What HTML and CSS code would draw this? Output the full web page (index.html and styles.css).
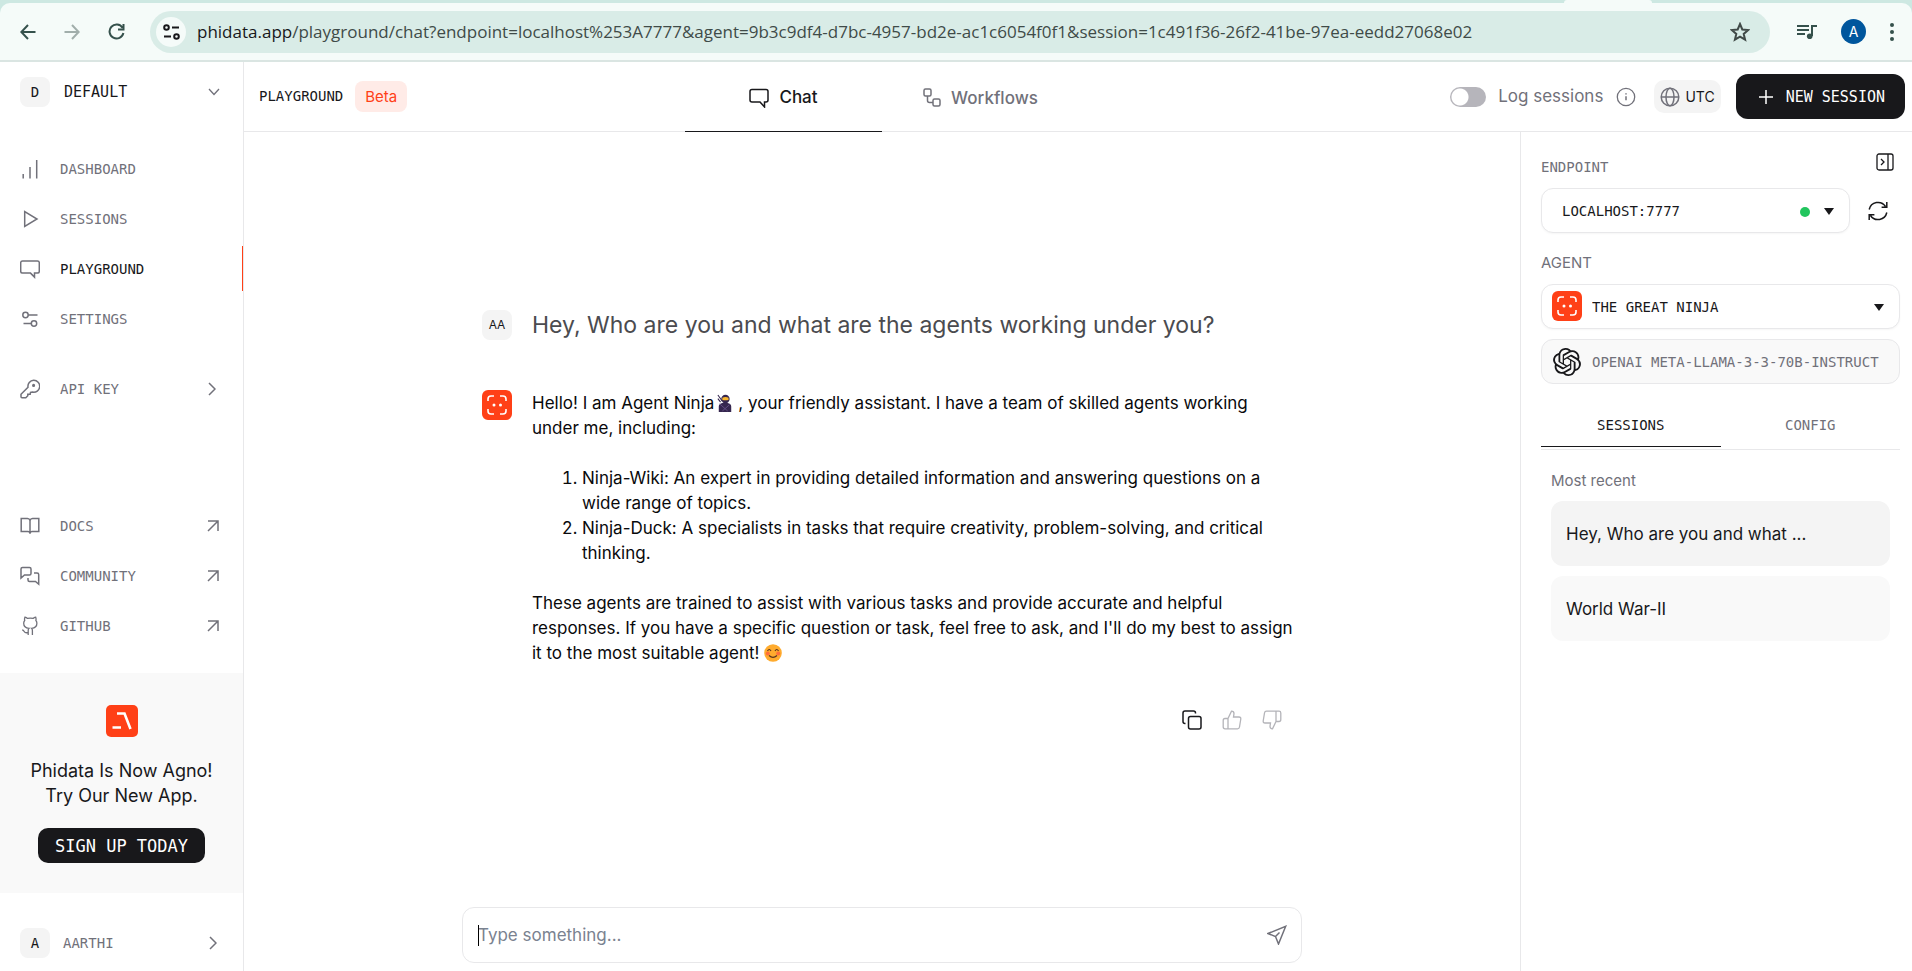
FILE: index.html
```html
<!DOCTYPE html>
<html lang="en">
<head>
<meta charset="utf-8">
<title>Playground</title>
<link rel="stylesheet" href="styles.css">
</head>
<body>
<svg class="sprite" aria-hidden="true">
  <symbol id="arrow-out" viewBox="0 0 12 12"><path d="M1 1h10v10M11 1 1 11"/></symbol>
  <symbol id="chevron" viewBox="0 0 8 14"><path d="m1 1 6 6-6 6"/></symbol>
  <symbol id="bot" viewBox="0 0 30 30"><rect width="30" height="30" rx="6" fill="#ff4017"/><g fill="none" stroke="#fff" stroke-width="1.6"><path d="M6 11V9q0-3 3-3h3M18 6h3q3 0 3 3v2M24 19v2q0 3-3 3h-3M12 24H9q-3 0-3-3v-2"/></g><circle cx="12" cy="15" r="1.5" fill="#fff"/><circle cx="18.500" cy="15" r="1.500" fill="#fff"/></symbol>
</svg>

<header class="browser">
  <div class="tabstrip"><span class="active-tab"></span></div>
  <div class="toolbar">
    <button class="plain nav-btn" aria-label="Back"><svg width="16" height="16" viewBox="0 0 16 16" class="ico dark w2"><path d="M15.500 8H1.500M8 1 1.300 8 8 15"/></svg></button>
    <button class="plain nav-btn" aria-label="Forward"><svg width="16" height="16" viewBox="0 0 16 16" class="ico faded w2"><path d="M.5 8h14M8 1l6.700 7L8 15"/></svg></button>
    <button class="plain nav-btn" aria-label="Reload"><svg width="17" height="17" viewBox="0 0 17 17" class="ico dark w2"><path d="M14.500 4.800A7 7 0 1 0 15.400 10M15.500 1v5.500H10"/></svg></button>
    <div class="omnibox">
      <button class="plain site-info" aria-label="Site information"><svg width="17" height="16" viewBox="0 0 17 16" class="ico ink w2"><circle cx="3.500" cy="3.500" r="2.300"/><path d="M9 3.500h7M1 12.500h7"/><circle cx="13.500" cy="12.500" r="2.300"/></svg></button>
      <div class="url"><span>phidata.app</span>/playground/chat?endpoint=localhost%253A7777&amp;agent=9b3c9df4-d7bc-4957-bd2e-ac1c6054f0f1&amp;session=1c491f36-26f2-41be-97ea-eedd27068e02</div>
      <button class="plain" aria-label="Bookmark"><svg width="20" height="20" viewBox="0 0 20 20" class="ico slate w2"><path d="m10 2 2.300 5.500 5.900.5-4.500 3.900 1.400 5.800L10 14.600l-5.100 3.100 1.400-5.800L1.800 8l5.900-.5z"/></svg></button>
    </div>
    <button class="plain" aria-label="Media"><svg width="20" height="16" viewBox="0 0 20 16" class="ico dark w2"><path d="M0 2h12M0 6h12M0 10h8M15 12V2h5"/><circle cx="12.700" cy="12.300" r="2.800" fill="#35514c" stroke="none"/></svg></button>
    <button class="plain profile" aria-label="Profile">A</button>
    <button class="plain" aria-label="Menu"><svg width="4" height="18" viewBox="0 0 4 18" fill="#35514c"><circle cx="2" cy="2" r="2"/><circle cx="2" cy="9" r="2"/><circle cx="2" cy="16" r="2"/></svg></button>
  </div>
</header>

<div class="app">
  <aside class="sidebar">
    <button class="plain workspace"><span class="badge">D</span><span class="grow">DEFAULT</span><svg width="12" height="8" viewBox="0 0 12 8" class="ico"><path d="m1 1 5 5.500L11 1"/></svg></button>
    <nav class="menu">
      <a href="#"><svg width="20" height="20" viewBox="0 0 20 20" class="ico w15"><path d="M3.200 15v4.500M10 8v11.500M16.700 1v18.500"/></svg>DASHBOARD</a>
      <a href="#"><svg width="20" height="20" viewBox="0 0 20 20" class="ico w15"><path d="M4.700 2.500v15L17 10z"/></svg>SESSIONS</a>
      <a href="#" class="current"><svg width="20" height="20" viewBox="0 0 20 20" class="ico w15"><path d="M2.500 2h15q1.800 0 1.800 1.800v8.500q0 1.800-1.800 1.800h-3v4l-4-4h-8Q.7 14.100.7 12.300V3.800Q.7 2 2.500 2z"/></svg>PLAYGROUND</a>
      <a href="#"><svg width="20" height="20" viewBox="0 0 20 20" class="ico w15"><circle cx="5.500" cy="6" r="2.700"/><path d="M8.200 6h9.300M3.500 14.500h8"/><circle cx="14" cy="14.500" r="2.700"/></svg>SETTINGS</a>
      <a href="#" class="spaced"><svg width="20" height="20" viewBox="0 0 20 20" class="ico w15"><path d="M8 8.200A5.900 5.900 0 1 1 12.500 13l-2 .3-.3 2H7.800v1.500l-2 2H2q-1 0-1-1v-2.600z"/><circle cx="13.600" cy="6.400" r=".8" fill="#71717a"/></svg><span class="grow">API KEY</span><svg width="8" height="14" class="ico w15 end"><use href="#chevron"/></svg></a>
    </nav>
    <nav class="menu links">
      <a href="#"><svg width="20" height="20" viewBox="0 0 20 20" class="ico w15"><path d="M10 4.500Q9.500 2.500 7.500 2.500H1.200v13h6.600q2.200 0 2.200 2.200V4.500q.5-2 2.500-2h6.300v13h-6.600q-2.200 0-2.200 2.200"/></svg><span class="grow">DOCS</span><svg width="12" height="12" class="ico w15"><use href="#arrow-out"/></svg></a>
      <a href="#"><svg width="20" height="20" viewBox="0 0 20 20" class="ico w15"><path d="M2.500 1.500h7q1.500 0 1.500 1.500v4.500Q11 9 9.500 9h-5L1 12V3q0-1.500 1.500-1.500zM14 7h3q1.700 0 1.700 1.500v9.700L15.500 15.500h-6Q8 15.500 8 14v-2"/></svg><span class="grow">COMMUNITY</span><svg width="12" height="12" class="ico w15"><use href="#arrow-out"/></svg></a>
      <a href="#"><svg width="20" height="20" viewBox="0 0 20 20" class="ico"><path d="M8.200 19v-4.500q0-1.500.8-2.200-5.300-.5-5.300-5.100 0-1.600 1-2.700Q4.200 3 4.900 1.200q1.600.3 2.600 1.200 2.700-.7 5.600 0 1-.9 2.600-1.200.7 1.800.2 3.300 1 1.100 1 2.700 0 4.600-5.300 5.100.8.700.8 2.200V19M8.200 16.500q-3 .8-4-1-.8-1.500-2-1.500"/></svg><span class="grow">GITHUB</span><svg width="12" height="12" class="ico w15"><use href="#arrow-out"/></svg></a>
    </nav>
    <section class="promo">
      <svg width="32" height="32" viewBox="0 0 32 32"><rect width="32" height="32" rx="5" fill="#ff4017"/><path d="M11 8.500h7.500L24.500 24M6.500 22.500H15" fill="none" stroke="#fff" stroke-width="2.600"/></svg>
      <p>Phidata Is Now Agno!<br>Try Our New App.</p>
      <button class="signup">SIGN UP TODAY</button>
    </section>
    <button class="plain user"><span class="badge">A</span><span class="grow">AARTHI</span><svg width="8" height="14" class="ico w15 end"><use href="#chevron"/></svg></button>
  </aside>

  <div class="content">
    <header class="topbar">
      <div class="title"><h1>PLAYGROUND</h1><span class="beta">Beta</span></div>
      <nav class="tabs">
        <a href="#" class="on"><svg width="20" height="20" viewBox="0 0 20 20" class="ico ink w15"><path d="M3 1.500h14q2 0 2 2V12q0 2-2 2h-1.500v5L11 14H3q-2 0-2-2V3.500q0-2 2-2z"/></svg>Chat</a>
        <a href="#"><svg width="18" height="20" viewBox="0 0 18 20" class="ico w15"><rect x="1" y="1" width="7" height="7" rx="1.500"/><rect x="10" y="11" width="7" height="7" rx="1.500"/><path d="M4.500 8v4.500q0 2 2 2H10"/></svg>Workflows</a>
      </nav>
      <div class="actions">
        <label class="log"><input type="checkbox" class="switch">Log sessions</label>
        <svg width="20" height="20" viewBox="0 0 20 20" class="ico info" role="img" aria-label="Info"><circle cx="10" cy="10" r="8.700"/><path d="M10 9.300v4M10 6.200v1.200" stroke-width="1.500"/></svg>
        <button class="utc"><svg width="20" height="20" viewBox="0 0 20 20" class="ico w15"><circle cx="10" cy="10" r="8.800"/><ellipse cx="10" cy="10" rx="4" ry="8.800"/><path d="M1.200 10h17.600"/></svg>UTC</button>
        <button class="new"><svg width="14" height="14" viewBox="0 0 14 14" class="ico white w15"><path d="M7 0v14M0 7h14"/></svg>NEW SESSION</button>
      </div>
    </header>

    <div class="body">
      <main class="chat">
        <div class="thread">
          <article class="row">
            <span class="badge small">AA</span>
            <p class="question">Hey, Who are you and what are the agents working under you?</p>
          </article>
          <article class="row answer">
            <svg width="30" height="30" role="img" aria-label="Agent"><use href="#bot"/></svg>
            <div class="text">
              <p>Hello! I am Agent Ninja<svg class="emoji ninja" width="16" height="18" viewBox="0 0 18 20" role="img" aria-label="ninja"><path d="M1 1l5 7M1 5l3 4" stroke="#35264f" stroke-width="1.200"/><path d="M2 20v-6q0-3 4-4l3-1 3 1q4 1 4 4v6z" fill="#35264f"/><circle cx="9.500" cy="5.500" r="4.700" fill="#35264f"/><path d="M6 4q3.500-1.500 7 0v2.500q-3.500 1-7 0z" fill="#f8b62d"/><path d="m3 11 9 8M14 12l-8 7" stroke="#665087" stroke-width="1"/></svg>, your friendly assistant. I have a team of skilled agents working under me, including:</p>
              <ol>
                <li>Ninja-Wiki: An expert in providing detailed information and answering questions on a wide range of topics.</li>
                <li>Ninja-Duck: A specialists in tasks that require creativity, problem-solving, and critical thinking.</li>
              </ol>
              <p>These agents are trained to assist with various tasks and provide accurate and helpful responses. If you have a specific question or task, feel free to ask, and I'll do my best to assign it to the most suitable agent! <svg class="emoji" width="18" height="18" viewBox="0 0 18 18" role="img" aria-label="smile"><circle cx="9" cy="9" r="8.800" fill="#ffab2e"/><circle cx="3.800" cy="9.500" r="2" fill="#ff6d3a"/><circle cx="14.200" cy="9.500" r="2" fill="#ff6d3a"/><path d="M3.500 7Q5.200 4 7 7M11 7q1.800-3 3.500 0M5 11.500q4 3.600 8 0" fill="none" stroke="#5a3520" stroke-width="1.200"/></svg></p>
            </div>
          </article>
          <div class="feedback">
            <button class="plain" aria-label="Copy"><svg width="20" height="20" viewBox="0 0 20 20" class="ico ink w15"><rect x="6.500" y="6.500" width="12.500" height="12.500" rx="2"/><path d="M3.500 13.500H3q-2 0-2-2V3q0-2 2-2h8.500q2 0 2 2v.5"/></svg></button>
            <button class="plain" aria-label="Good"><svg width="20" height="20" viewBox="0 0 20 20" class="ico pale"><path d="M6 8.500 9.500 1.200q2.500 0 2.500 2.500L11.500 7H17q2 0 1.800 2l-1.300 8q-.3 1.800-2 1.800H3q-1.800 0-1.800-1.800v-6.500q0-2 1.800-2h3zv10.300"/></svg></button>
            <button class="plain" aria-label="Bad"><svg width="20" height="20" viewBox="0 0 20 20" class="ico pale"><path d="M14 11.500l-3.500 7.300Q8 18.800 8 16.300L8.500 13H3q-2 0-1.800-2l1.300-8q.3-1.800 2-1.800H17q1.800 0 1.800 1.800v6.500q0 2-1.800 2h-3zV1.200"/></svg></button>
          </div>
        </div>
        <form class="composer">
          <input type="text" placeholder="Type something..." aria-label="Message"><span class="caret"></span>
          <button class="plain" type="button" aria-label="Send"><svg width="20" height="20" viewBox="0 0 20 20" class="ico w15"><path d="M1 8.500 18.700 1.300 11.500 19l-3-7.500zM8.500 11.500l4-4"/></svg></button>
        </form>
      </main>

      <aside class="panel">
        <div class="panel-head"><label for="endpoint">ENDPOINT</label><button class="plain" aria-label="Collapse"><svg width="18" height="18" viewBox="0 0 18 18" class="ico ink"><rect x="1" y="1" width="16" height="16" rx="2"/><path d="M12 1v16M5 6l3 3-3 3"/></svg></button></div>
        <div class="endpoint">
          <div class="field"><select id="endpoint"><option>LOCALHOST:7777</option></select><i class="dot"></i><i class="tri"></i></div>
          <button class="plain" aria-label="Refresh"><svg width="20" height="20" viewBox="0 0 20 20" class="ico ink w15"><path d="M1.200 8.500A9 9 0 0 1 17.500 5.500M18.800 1v5.200h-5.200M18.800 11.500A9 9 0 0 1 2.500 14.500M1.200 19v-5.200h5.200"/></svg></button>
        </div>
        <label for="agent" class="agent-label">AGENT</label>
        <div class="field agent"><select id="agent"><option>THE GREAT NINJA</option></select><svg class="lead" width="30" height="30"><use href="#bot"/></svg><i class="tri"></i></div>
        <div class="model"><svg width="28" height="28" viewBox="0 0 24 24" fill="#18181b"><path d="M22.2819 9.8211a5.9847 5.9847 0 0 0-.5157-4.9108 6.0462 6.0462 0 0 0-6.5098-2.9A6.0651 6.0651 0 0 0 4.9807 4.1818a5.9847 5.9847 0 0 0-3.9977 2.9 6.0462 6.0462 0 0 0 .7427 7.0966 5.98 5.98 0 0 0 .511 4.9107 6.051 6.051 0 0 0 6.5146 2.9001A5.9847 5.9847 0 0 0 13.2599 24a6.0557 6.0557 0 0 0 5.7718-4.2058 5.9894 5.9894 0 0 0 3.9977-2.9001 6.0557 6.0557 0 0 0-.7475-7.0729zm-9.022 12.6081a4.4755 4.4755 0 0 1-2.8764-1.0408l.1419-.0804 4.7783-2.7582a.7948.7948 0 0 0 .3927-.6813v-6.7369l2.02 1.1686a.071.071 0 0 1 .038.052v5.5826a4.504 4.504 0 0 1-4.4945 4.4944zm-9.6607-4.1254a4.4708 4.4708 0 0 1-.5346-3.0137l.142.0852 4.783 2.7582a.7712.7712 0 0 0 .7806 0l5.8428-3.3685v2.3324a.0804.0804 0 0 1-.0332.0615L9.74 19.9502a4.4992 4.4992 0 0 1-6.1408-1.6464zM2.3408 7.8956a4.485 4.485 0 0 1 2.3655-1.9728V11.6a.7664.7664 0 0 0 .3879.6765l5.8144 3.3543-2.0201 1.1685a.0757.0757 0 0 1-.071 0l-4.8303-2.7865A4.504 4.504 0 0 1 2.3408 7.872zm16.5963 3.8558L13.1038 8.364 15.1192 7.2a.0757.0757 0 0 1 .071 0l4.8303 2.7913a4.4944 4.4944 0 0 1-.6765 8.1042v-5.6772a.79.79 0 0 0-.407-.667zm2.0107-3.0231l-.142-.0852-4.7735-2.7818a.7759.7759 0 0 0-.7854 0L9.409 9.2297V6.8974a.0662.0662 0 0 1 .0284-.0615l4.8303-2.7866a4.4992 4.4992 0 0 1 6.6802 4.66zM8.3065 12.863l-2.02-1.1638a.0804.0804 0 0 1-.038-.0567V6.0742a4.4992 4.4992 0 0 1 7.3757-3.4537l-.142.0805L8.704 5.459a.7948.7948 0 0 0-.3927.6813zm1.0976-2.3654l2.602-1.4998 2.6069 1.4998v2.9994l-2.5974 1.4997-2.6067-1.4997Z"/></svg>OPENAI META-LLAMA-3-3-70B-INSTRUCT</div>
        <nav class="panel-tabs"><a href="#" class="on">SESSIONS</a><a href="#">CONFIG</a></nav>
        <section class="recent">
          <h2>Most recent</h2>
          <button class="session selected">Hey, Who are you and what ...</button>
          <button class="session">World War-II</button>
        </section>
      </aside>
    </div>
  </div>
</div>
</body>
</html>
```

FILE: styles.css
```css
:root {
  --ink: #18181b;
  --muted: #71717a;
  --line: #e8e8ea;
  --brand: #ff4017;
  --mono: "DejaVu Sans Mono", "Liberation Mono", monospace;
}

* { box-sizing: border-box; }

body {
  margin: 0;
  height: 100vh;
  display: flex;
  flex-direction: column;
  font: 17px/25px Inter, "Liberation Sans", sans-serif;
  color: var(--ink);
  background: #fff;
}

p, h1, h2 { margin: 0; font-weight: 400; }
a { color: inherit; text-decoration: none; }
button, input, select { font: inherit; color: inherit; }
svg { flex: none; display: block; }

.sprite { position: absolute; width: 0; height: 0; }
.plain { padding: 0; border: 0; background: none; }
.grow { flex: 1; text-align: left; }

.ico { fill: none; stroke: var(--muted); stroke-width: 1.3; }
.w15 { stroke-width: 1.5; }
.w2 { stroke-width: 2; }
.ink { stroke: var(--ink); }
.white { stroke: #fff; }
.dark { stroke: #35514c; }
.slate { stroke: #414a48; }
.faded { stroke: #a1aeab; }
.pale { stroke: #b4b4b9; }

.badge {
  width: 30px;
  height: 30px;
  flex: none;
  display: grid;
  place-items: center;
  border-radius: 8px;
  background: #f4f4f4;
  color: var(--ink);
  font-size: 14px;
}
.badge.small { font-size: 12px; }

/* Browser chrome */
.browser { background: #cde8e2; }
.tabstrip { height: 3px; display: flex; justify-content: flex-end; }
.active-tab { width: 88px; margin-right: 260px; background: #f5fbf9; border-radius: 8px 8px 0 0; }
.toolbar {
  height: 59px;
  display: flex;
  align-items: center;
  gap: 24px;
  padding: 0 18px 0 20px;
  background: #f5fbf9;
  border-bottom: 2px solid #dae5e2;
  border-radius: 10px 10px 0 0;
}
.nav-btn { width: 20px; display: flex; }
.omnibox {
  flex: 1;
  min-width: 0;
  height: 42px;
  margin: 0 3px 0 -2px;
  display: flex;
  align-items: center;
  gap: 11px;
  padding: 0 20px 0 6px;
  border-radius: 21px;
  background: #d9ece7;
}
.site-info { width: 30px; height: 30px; display: grid; place-items: center; border-radius: 50%; background: #f5fbf9; }
.url {
  flex: 1;
  overflow: hidden;
  white-space: nowrap;
  font: 17px/25px "Open Sans", "Noto Sans", sans-serif;
  color: #3f4b48;
}
.url span { color: var(--ink); }
.profile { width: 25px; height: 25px; border-radius: 50%; background: #00569d; color: #fff; font-size: 14px; line-height: 25px; }

/* Frame */
.app { flex: 1; min-height: 0; display: flex; }
.sidebar {
  width: 244px;
  flex: none;
  display: flex;
  flex-direction: column;
  border-right: 1px solid var(--line);
  font: 14px/20px var(--mono);
  color: var(--muted);
}
.workspace, .user { display: flex; align-items: center; padding: 15px 23px 0 20px; }
.workspace { gap: 14px; color: var(--ink); font-size: 15px; }
.user { gap: 13px; padding: 35px 23px 13px 20px; }
.end { margin-right: 3px; }
.menu { display: flex; flex-direction: column; gap: 5px; margin-top: 39px; }
.menu a { height: 45px; display: flex; align-items: center; gap: 20px; padding: 0 24px 0 20px; }
.menu .current { color: var(--ink); border-right: 1px solid var(--brand); }
.menu .spaced { margin-top: 20px; }
.menu.links { margin: auto 0 25px; }
.promo {
  display: flex;
  flex-direction: column;
  align-items: center;
  padding: 32px 12px 30px;
  background: #f9f9f9;
  color: var(--ink);
}
.promo p { margin: 21px 0 20px; text-align: center; font: 18px/25px Inter, sans-serif; }
.signup { height: 35px; padding: 0 17px; border: 0; border-radius: 10px; background: var(--ink); color: #fff; font: 17px/20px var(--mono); }

.content { flex: 1; min-width: 0; display: flex; flex-direction: column; }
.topbar {
  height: 70px;
  display: grid;
  grid-template-columns: 9fr auto 17fr;
  border-bottom: 1px solid var(--line);
}
.title { display: flex; align-items: center; gap: 12px; padding: 0 0 1px 15px; }
.title h1 { font: 14px/20px var(--mono); }
.beta { padding: 3px 10px; border-radius: 8px; background: #ffebe7; color: var(--brand); font-size: 15px; }
.tabs { display: flex; margin-bottom: -1px; }
.tabs a { width: 197px; padding-top: 2px; display: flex; align-items: center; justify-content: center; gap: 10px; font-weight: 500; color: var(--muted); }
.tabs .on { color: var(--ink); border-bottom: 1px solid var(--ink); }
.actions { display: flex; align-items: center; justify-content: flex-end; padding-right: 7px; }
.log { display: flex; align-items: center; gap: 12px; color: var(--muted); }
.switch {
  appearance: none;
  width: 36px;
  height: 20px;
  margin: 0;
  border-radius: 10px;
  background: radial-gradient(circle at 10px 10px, #fff 8px, #b6b5bb 9px);
}
.info { margin: 0 18px 0 13px; }
.utc { height: 33px; display: flex; align-items: center; gap: 5px; padding: 0 6px; border: 0; border-radius: 10px; background: #f4f4f4; font-size: 14px; }
.new {
  height: 45px;
  margin-left: 15px;
  display: flex;
  align-items: center;
  gap: 13px;
  padding: 0 20px 0 23px;
  border: 0;
  border-radius: 12px;
  background: var(--ink);
  color: #fff;
  font: 15px/20px var(--mono);
}

/* Conversation */
.body { flex: 1; min-height: 0; display: flex; }
.chat { flex: 1; min-width: 0; display: flex; flex-direction: column; align-items: center; padding: 0 20px 8px; }
.thread { flex: 1; width: 100%; max-width: 800px; display: flex; flex-direction: column; justify-content: center; }
.row { display: flex; gap: 20px; }
.question { font-size: 23px; line-height: 30px; color: #4b4b4f; }
.answer { margin-top: 50px; }
.text { flex: 1; margin-right: -16px; padding-top: 1px; color: #09090b; }
.text ol { margin: 25px 0; padding-left: 50px; }
.emoji { display: inline-block; vertical-align: -3px; }
.ninja { margin: 0 5px 0 3px; }
.feedback { display: flex; justify-content: flex-end; gap: 20px; margin-top: 44px; }
.composer {
  width: 100%;
  max-width: 840px;
  height: 56px;
  position: relative;
  display: flex;
  align-items: center;
  padding: 0 14px 0 15px;
  border: 1px solid var(--line);
  border-radius: 12px;
}
.composer input { flex: 1; padding: 0; border: 0; outline: 0; background: none; }
.composer input::placeholder { color: #7a8290; opacity: 1; }
.caret { position: absolute; left: 15px; top: 17px; width: 1px; height: 21px; background: #000; }

/* Settings panel */
.panel {
  width: 392px;
  flex: none;
  padding: 20px 12px 0 20px;
  border-left: 1px solid var(--line);
  font: 14px/20px var(--mono);
}
.panel label { color: var(--muted); }
.panel-head { display: flex; justify-content: space-between; padding-right: 6px; }
.panel-head label { padding-top: 5px; }
.panel-head .plain { height: 20px; }
.endpoint { display: flex; align-items: center; gap: 18px; padding-right: 12px; margin: 11px 0 20px; }
.field { flex: 1; position: relative; }
.field select {
  appearance: none;
  width: 100%;
  height: 45px;
  display: block;
  padding: 0 20px;
  border: 1px solid var(--line);
  border-radius: 12px;
  background: #fff;
  box-shadow: 0 1px 2px #0000000a;
}
.agent select { padding-left: 50px; }
.lead { position: absolute; left: 11px; top: 7px; }
.tri { position: absolute; right: 16px; top: 20px; border: 5px solid transparent; border-top: 7px solid var(--ink); border-bottom: 0; }
.dot { position: absolute; right: 40px; top: 19px; width: 10px; height: 10px; border-radius: 50%; background: #22c55e; }
.agent-label { display: block; margin-bottom: 11px; font: 15px/20px Inter, sans-serif; }
.model {
  height: 45px;
  margin-top: 10px;
  display: flex;
  align-items: center;
  gap: 11px;
  padding: 0 11px;
  border: 1px solid var(--line);
  border-radius: 12px;
  background: #f9f9f9;
  color: var(--muted);
  white-space: nowrap;
}
.panel-tabs { display: flex; margin-top: 20px; padding-bottom: 2px; border-bottom: 1px solid var(--line); color: var(--muted); }
.panel-tabs a { flex: 1; height: 43px; display: grid; place-items: center; border-bottom: 1px solid transparent; }
.panel-tabs .on { color: var(--ink); border-color: var(--ink); }
.recent { display: flex; flex-direction: column; gap: 10px; padding: 21px 10px 0; font-family: Inter, sans-serif; }
.recent h2 { font-size: 15px; line-height: 20px; color: var(--muted); }
.session { height: 65px; padding: 0 15px; border: 0; border-radius: 12px; background: #f9f9f9; text-align: left; font-size: 17px; }
.session.selected { background: #f4f4f4; }
```
